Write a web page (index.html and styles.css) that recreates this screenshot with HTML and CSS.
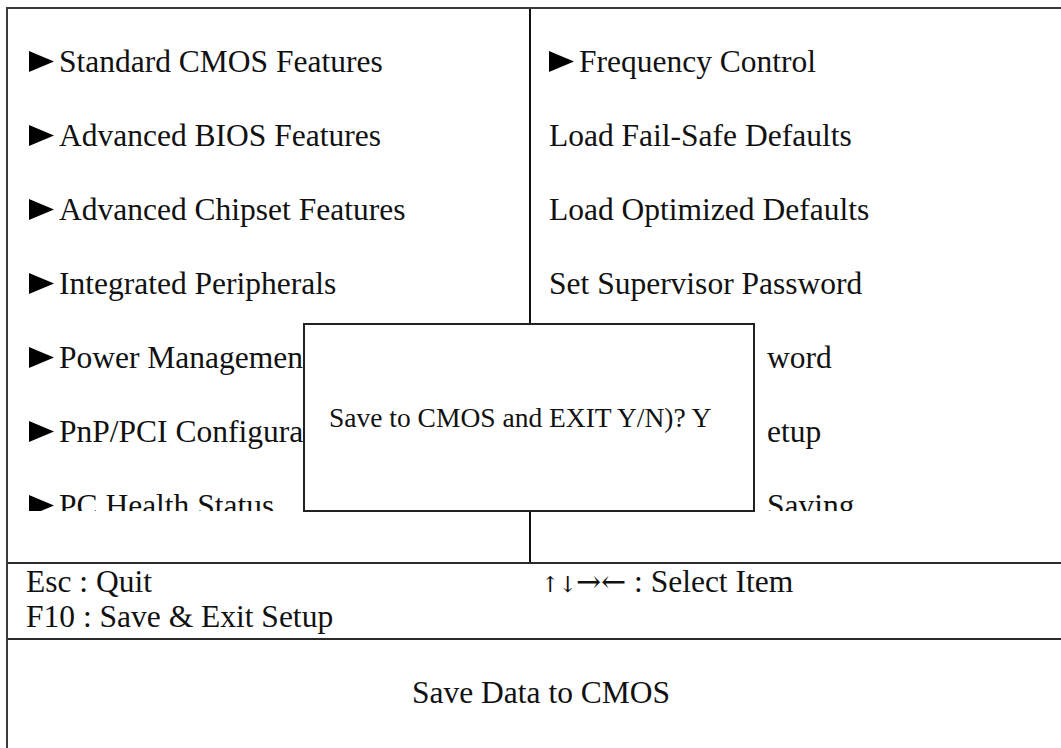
FILE: index.html
```html
<!DOCTYPE html>
<html lang="en">
<head>
  <meta charset="UTF-8">
  <title>CMOS Setup Utility</title>
  <link rel="stylesheet" href="styles.css">
</head>
<body>
  <div class="screen">

    <!-- main menu, two columns -->
    <div class="menu">
      <div class="col col-left">
        <ul class="menu-list">
          <li><svg class="tri" viewBox="0 0 25 21"><path d="M0 0 L25 10.5 L0 21 Z"/></svg>Standard CMOS Features</li>
          <li><svg class="tri" viewBox="0 0 25 21"><path d="M0 0 L25 10.5 L0 21 Z"/></svg>Advanced BIOS Features</li>
          <li><svg class="tri" viewBox="0 0 25 21"><path d="M0 0 L25 10.5 L0 21 Z"/></svg>Advanced Chipset Features</li>
          <li><svg class="tri" viewBox="0 0 25 21"><path d="M0 0 L25 10.5 L0 21 Z"/></svg>Integrated Peripherals</li>
          <li><svg class="tri" viewBox="0 0 25 21"><path d="M0 0 L25 10.5 L0 21 Z"/></svg>Power Management Setup</li>
          <li><svg class="tri" viewBox="0 0 25 21"><path d="M0 0 L25 10.5 L0 21 Z"/></svg>PnP/PCI Configurations</li>
          <li><svg class="tri" viewBox="0 0 25 21"><path d="M0 0 L25 10.5 L0 21 Z"/></svg>PC Health Status</li>
        </ul>
      </div>
      <div class="col col-right">
        <ul class="menu-list">
          <li><svg class="tri" viewBox="0 0 25 21"><path d="M0 0 L25 10.5 L0 21 Z"/></svg>Frequency Control</li>
          <li>Load Fail-Safe Defaults</li>
          <li>Load Optimized Defaults</li>
          <li>Set Supervisor Password</li>
          <li class="cut">word</li>
          <li class="cut">etup</li>
          <li class="cut">Saving</li>
        </ul>
      </div>

      <div class="dialog">Save to CMOS and EXIT Y/N)? Y</div>
    </div>

    <!-- key help -->
    <div class="keys">
      <div class="keys-left">
        <div>Esc : Quit</div>
        <div>F10 : Save &amp; Exit Setup</div>
      </div>
      <div class="keys-right"><span class="arrows-ud">↑↓</span><span class="arrows-lr">→←</span> : Select Item</div>
    </div>

    <div class="status">Save Data to CMOS</div>
  </div>
</body>
</html>
```

FILE: styles.css
```css
html, body {
  margin: 0;
  padding: 0;
  background: #fff;
  overflow: hidden;
}

body {
  font-family: "Liberation Serif", "Times New Roman", serif;
  font-size: 31.5px;
  color: #111;
}

.screen {
  margin: 7px 0 0 6px;
  width: 1070px;
  border-top: 2px solid #3a3a3a;
  border-left: 2px solid #3a3a3a;
  border-right: 2px solid #3a3a3a;
  box-sizing: border-box;
}

.menu {
  position: relative;
  display: grid;
  grid-template-columns: 523px 1fr;
  height: 553px;
  border-bottom: 2px solid #2a2a2a;
}

.col-left {
  border-right: 2px solid #111;
  padding-left: 21px;
}

.col-right {
  padding-left: 18px;
}

.menu-list {
  list-style: none;
  margin: 0;
  padding: 16px 0 0 0;
  height: 502px;
  box-sizing: border-box;
  overflow: hidden;
}

.menu-list li {
  line-height: 74px;
  white-space: nowrap;
}

.menu-list li.cut {
  padding-left: 218px;
}

.tri {
  width: 25px;
  height: 21px;
  margin-right: 5px;
  fill: #000;
}

.dialog {
  position: absolute;
  left: 295px;
  top: 314px;
  width: 452px;
  height: 189px;
  box-sizing: border-box;
  border: 2px solid #222;
  background: #fff;
  display: flex;
  align-items: center;
  padding-left: 24px;
  font-size: 27.5px;
  white-space: nowrap;
}

.keys {
  display: grid;
  grid-template-columns: 523px 1fr;
  height: 76px;
  box-sizing: border-box;
  border-bottom: 2px solid #2a2a2a;
  line-height: 35px;
}

.keys-left {
  padding-left: 18px;
}

.keys-right {
  padding-left: 10px;
}

.arrows-ud {
  font-family: "DejaVu Serif", serif;
  font-size: 22px;
  letter-spacing: -1px;
}

.arrows-lr {
  font-family: "DejaVu Serif", serif;
  font-size: 30px;
  letter-spacing: 0;
}

.status {
  text-align: center;
  line-height: 36px;
  padding: 35px 0 80px;
}
```
